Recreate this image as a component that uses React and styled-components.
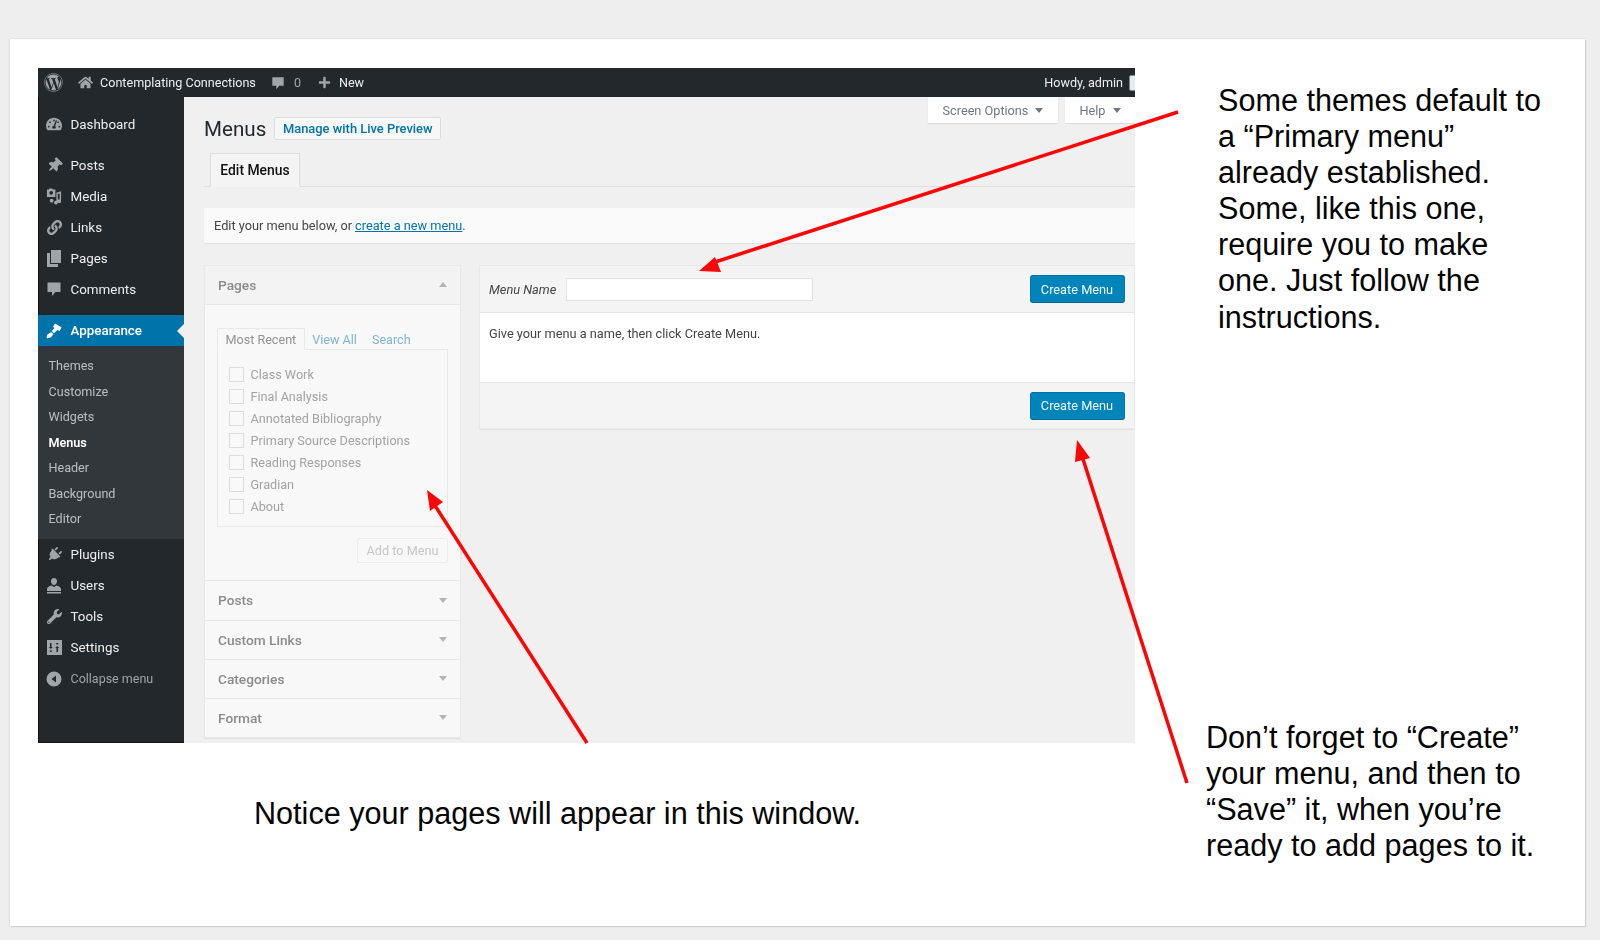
import React from "react";
import styled, { createGlobalStyle } from "styled-components";
import {
  FaWordpress, FaHome, FaPlus, FaTachometerAlt, FaThumbtack, FaLink, FaPlug, FaWrench,
} from "react-icons/fa";

const Global = createGlobalStyle`
  html, body { margin: 0; padding: 0; background: #eeeeee; }
  * { box-sizing: border-box; }
`;

const UI = `Roboto, "Liberation Sans", sans-serif`;

const Page = styled.div`
  position: relative;
  width: 1600px;
  height: 940px;
  padding: 39px 15.5px 14px 10px;
  overflow: hidden;
`;
const Slide = styled.div`
  display: flex;
  height: 887px;
  padding: 29px 0 0 28px;
  background: #fff;
  box-shadow: 1px 1px 1px #d0d0d0, -1px 0 1px #dcdcdc, 0 -1px 0 #e2e2e2;
`;
const LeftCol = styled.div`
  width: 1097px;
  flex: none;
`;
const RightCol = styled.div`
  flex: 1;
  padding-left: 71px;
`;
const Note = styled.p`
  margin: ${(p) => p.$top}px 0 0 ${(p) => p.$left}px;
  font: 30.6px/36.1px "Liberation Sans", Arial, sans-serif;
  color: #050505;
  white-space: pre-line;
`;
const Caption = styled.p`
  margin: 52px 0 0 216px;
  font: 30.6px/36px "Liberation Sans", Arial, sans-serif;
  color: #050505;
`;

const Frame = styled.div`
  height: 675px;
  display: flex;
  flex-direction: column;
  overflow: hidden;
  background: #f0f0f0;
  font-family: ${UI};
  filter: blur(0.3px);
`;
const AdminBar = styled.div`
  height: 29px;
  flex: none;
  background: #23282d;
  display: flex;
  align-items: center;
  color: #eee;
  font-size: 12.6px;
  padding-left: 6px;
`;
const BarIcon = styled.span`
  display: inline-flex;
  color: #a0a5aa;
  font-size: ${(p) => p.$size || 16}px;
  margin-left: ${(p) => p.$ml || 0}px;
  margin-right: ${(p) => p.$mr || 0}px;
`;
const BarText = styled.span`
  color: ${(p) => p.$dim ? "#a0a5aa" : "#eee"};
`;
const BarSpacer = styled.div`flex: 1;`;
const Avatar = styled.span`
  width: 16px;
  height: 16px;
  flex: none;
  margin: 0 -10px 0 6px;
  background: #dfeef2;
  border: 1px solid #888;
  border-radius: 2px;
`;
const Body = styled.div`
  flex: 1;
  display: flex;
  min-height: 0;
`;
const Sidebar = styled.nav`
  width: 146px;
  flex: none;
  background: #23282d;
  padding-top: 11.5px;
  box-shadow: inset 1px 0 #101214, inset 0 -1px #101214;
`;
const MenuRow = styled.div`
  position: relative;
  height: 31px;
  display: flex;
  align-items: center;
  padding-left: 8px;
  margin-top: ${(p) => p.$gap || 0}px;
  background: ${(p) => p.$active ? "#0073aa" : "transparent"};
  color: ${(p) => p.$dim ? "#a0a5aa" : p.$active ? "#fff" : "#eee"};
  font-size: ${(p) => p.$dim ? 12.5 : 13.4}px;
  ${(p) => p.$active && `
    &::after {
      content: "";
      position: absolute;
      right: 0;
      top: 9px;
      border: 7px solid transparent;
      border-right-color: #f0f0f0;
      border-left-width: 0;
    }
  `}
`;
const MenuIcon = styled.span`
  width: 16px;
  height: 18px;
  margin-right: 8.5px;
  display: flex;
  align-items: center;
  justify-content: center;
  color: ${(p) => p.$active ? "#fff" : "#a0a5aa"};
  font-size: 15px;
`;
const SubMenu = styled.div`
  background: #32373c;
  padding: 7.5px 0 7.5px 10.5px;
`;
const SubItem = styled.div`
  height: 25.5px;
  line-height: 25.5px;
  font-size: 12.6px;
  color: ${(p) => p.$current ? "#fff" : "rgba(240,245,250,.7)"};
  font-weight: ${(p) => p.$current ? 600 : 400};
`;

const Content = styled.main`
  flex: 1;
  min-width: 0;
  padding-left: 20px;
  display: flex;
  flex-direction: column;
`;
const MetaBar = styled.div`
  height: 0;
  display: flex;
  justify-content: flex-end;
  gap: 7px;
`;
const MetaTab = styled.div`
  width: ${(p) => p.$w}px;
  height: 26px;
  background: #fff;
  box-shadow: 0 1px 1px rgba(0,0,0,.08);
  display: flex;
  align-items: center;
  justify-content: center;
  gap: 7px;
  font-size: 12.7px;
  color: #72777c;
`;
const Caret = styled.span`
  width: 0;
  height: 0;
  border-left: 4px solid transparent;
  border-right: 4px solid transparent;
  border-${(p) => p.$up ? "bottom" : "top"}: 5px solid ${(p) => p.$color || "#72777c"};
`;
const TitleRow = styled.div`
  display: flex;
  align-items: center;
  gap: 8px;
  padding-top: 20px;
  height: 43px;
  flex: none;
`;
const Title = styled.h1`
  margin: 0;
  font-size: 20.6px;
  font-weight: 400;
  color: #23282d;
`;
const LiveButton = styled.span`
  height: 23px;
  width: 167px;
  display: flex;
  align-items: center;
  justify-content: center;
  background: #f7f7f7;
  border: 1px solid #ddd;
  border-radius: 2px;
  font-size: 12.9px;
  font-weight: 500;
  color: #0073aa;
`;
const TabLine = styled.div`
  height: 34px;
  margin-top: 13px;
  flex: none;
  padding-left: 6px;
  border-bottom: 1px solid #ddd;
`;
const Tab = styled.div`
  width: 90px;
  height: 34px;
  display: flex;
  align-items: center;
  justify-content: center;
  background: #f4f4f4;
  border: 1px solid #ddd;
  border-bottom-color: #f4f4f4;
  font-size: 13.9px;
  font-weight: 500;
  color: #111;
`;
const Notice = styled.div`
  height: 35px;
  flex: none;
  margin-top: 21px;
  padding-left: 10px;
  display: flex;
  align-items: center;
  background: #fafafa;
  box-shadow: 0 1px 1px rgba(0,0,0,.05);
  font-size: 12.75px;
  color: #444;
  a { color: #0073aa; text-decoration: underline; margin-left: 3px; }
`;
const Columns = styled.div`
  display: flex;
  gap: 18px;
  margin-top: 22px;
  align-items: flex-start;
`;
const Accordion = styled.div`
  width: 257px;
  flex: none;
  background: #f8f8f8;
  box-shadow: 0 1px 1px rgba(0,0,0,.06);
  border: 1px solid #e8e8e8;
  border-bottom: 0;
`;
const AccHead = styled.div`
  height: ${(p) => p.$h}px;
  display: flex;
  align-items: center;
  justify-content: space-between;
  padding: 0 13px 1px;
  background: ${(p) => p.$open ? "#f3f3f3" : "#f8f8f8"};
  border-bottom: 1px solid #e6e6e6;
  font-size: 13.7px;
  font-weight: 500;
  color: #8a8a8a;
`;
const AccBody = styled.div`
  height: 276px;
  padding: 23px 12px 0 12px;
  display: flex;
  flex-direction: column;
  border-bottom: 1px solid #e6e6e6;
`;
const MiniTabs = styled.div`
  height: 22px;
  flex: none;
  display: flex;
  align-items: stretch;
  font-size: 12.6px;
  margin-bottom: -1px;
  position: relative;
`;
const MiniTab = styled.span`
  padding: 0 7.5px;
  display: flex;
  align-items: center;
  margin-right: ${(p) => p.$mr || 0}px;
  color: ${(p) => p.$current ? "#929292" : "#7fb5d1"};
  ${(p) => p.$current && `
    border: 1px solid #e8e8e8;
    border-bottom-color: #f8f8f8;
  `}
`;
const PagePanel = styled.div`
  height: 178px;
  flex: none;
  border: 1px solid #e8e8e8;
  padding: 13px 10.5px 0;
  display: flex;
  flex-direction: column;
`;
const PageRow = styled.label`
  height: 22px;
  flex: none;
  display: flex;
  align-items: center;
  gap: 7px;
  font-size: 12.65px;
  color: #a2a2a2;
`;
const Check = styled.span`
  width: 15px;
  height: 15px;
  flex: none;
  background: #f9f9f9;
  border: 1px solid #dcdcdc;
`;
const AddRow = styled.div`
  display: flex;
  justify-content: flex-end;
  margin-top: 11px;
`;
const AddButton = styled.span`
  width: 91px;
  height: 25px;
  display: flex;
  align-items: center;
  justify-content: center;
  background: #f8f8f8;
  border: 1px solid #ececec;
  border-radius: 2px;
  font-size: 12.7px;
  color: #c6c6c6;
`;
const MenuBox = styled.section`
  flex: 1;
  min-width: 0;
  height: 164px;
  display: flex;
  flex-direction: column;
  border: 1px solid #e8e8e8;
  box-shadow: 0 1px 1px rgba(0,0,0,.05);
  background: #f4f4f4;
`;
const BoxHead = styled.div`
  height: 47px;
  flex: none;
  display: flex;
  align-items: center;
  padding: 0 9.5px 0 9px;
  border-bottom: 1px solid #e4e4e4;
`;
const NameLabel = styled.em`
  width: 77px;
  flex: none;
  font-size: 12.8px;
  color: #444;
`;
const NameInput = styled.div`
  width: 247px;
  height: 23px;
  background: #fff;
  border: 1px solid #e2e2e2;
`;
const BoxBody = styled.div`
  height: 70px;
  flex: none;
  padding: 13px 9px;
  background: #fff;
  border-bottom: 1px solid #e4e4e4;
  font-size: 12.75px;
  color: #444;
`;
const BoxFoot = styled.div`
  flex: 1;
  display: flex;
  align-items: center;
  justify-content: flex-end;
  padding-right: 9.5px;
`;
const Primary = styled.span`
  margin-left: auto;
  width: 95px;
  height: 28px;
  display: flex;
  align-items: center;
  justify-content: center;
  background: #0085ba;
  border: 1px solid #0073aa;
  border-bottom-color: #006799;
  border-radius: 3px;
  font-size: 12.75px;
  color: #f2f8fb;
`;
const Arrows = styled.svg`
  position: absolute;
  inset: 0;
  width: 1600px;
  height: 940px;
  pointer-events: none;
`;

const Bubble = ({ s = 16 }) => (
  <svg width={s} height={s} viewBox="0 0 16 16" fill="currentColor"><path d="M1.5 1.5h13v9.5H9.500L6 15v-4H1.500z" /></svg>
);
const Dial = ({ s = 16 }) => <FaTachometerAlt size={s} />;
const Media = () => (
  <svg width="17" height="17" viewBox="0 0 17 17" fill="currentColor">
    <path d="M1 1h2l.6-1h3l.6 1H10v8H1zM5.500 2.600a2 2 0 1 0 0 4 2 2 0 0 0 0-4z" fillRule="evenodd" />
    <path d="M11 4.500l5-1.500v10.500a2 2 0 1 1-1.500-1.900V5.300l-2 .6V15a2 2 0 1 1-1.500-1.900zM6 11a2 2 0 1 1-.01 0z" />
  </svg>
);
const Pages = () => (
  <svg width="16" height="17" viewBox="0 0 16 17" fill="currentColor">
    <path d="M5 0h10v13H5z" /><path d="M1 3h3v11h8v3H1z" />
  </svg>
);
const Brush = () => (
  <svg width="17" height="17" viewBox="0 0 17 17" fill="currentColor">
    <path d="M9.500 1L16.500 5l-2 4-2.500-1-3.500 3.500-2.500-2.500L9 6 7.500 4.500z" />
    <path d="M5.600 10l2.400 2.400-2.800 3.400c-.8.8-4.200 1.200-4.200 1.200s-.6-3 .6-4.200z" />
  </svg>
);
const User = () => (
  <svg width="16" height="17" viewBox="0 0 16 17" fill="currentColor">
    <path d="M8 1c2 0 3 1.500 3 3.300S10 8 8 8 5 6.100 5 4.300 6 1 8 1z" />
    <path d="M5.500 8.500L8 10l2.500-1.500c2 .5 4.500 1.500 4.500 3.500v2H1v-2c0-2 2.500-3 4.500-3.500zM1 15h14v1.500H1z" />
  </svg>
);
const Settings = () => (
  <svg width="15" height="15" viewBox="0 0 15 15" fill="currentColor" fillRule="evenodd">
    <path d="M0 0h15v15H0zM3 3v4H1.800l2 2 2-2H4.500V3zM11 12V8h1.200l-2-2-2 2h1.300v4zM2.800 10.500v1.500h2v-1.500zM9.300 3v1.500h2V3z" />
  </svg>
);
const Collapse = () => (
  <svg width="16" height="16" viewBox="0 0 16 16" fill="currentColor" fillRule="evenodd">
    <path d="M8 .5a7.500 7.500 0 1 1 0 15 7.500 7.500 0 0 1 0-15zM10 4.500L5.500 8l4.500 3.500z" />
  </svg>
);

const topItems = [
  ["Posts", <FaThumbtack style={{ transform: "rotate(45deg)" }} />],
  ["Media", <Media />],
  ["Links", <FaLink />],
  ["Pages", <Pages />],
  ["Comments", <Bubble />],
];
const subItems = ["Themes", "Customize", "Widgets", "Menus", "Header", "Background", "Editor"];
const lowItems = [
  ["Plugins", <FaPlug style={{ transform: "rotate(45deg) scaleX(-1)" }} />],
  ["Users", <User />],
  ["Tools", <FaWrench />],
  ["Settings", <Settings />],
];
const pages = ["Class Work", "Final Analysis", "Annotated Bibliography", "Primary Source Descriptions", "Reading Responses", "Gradian", "About"];
const closed = [["Posts", 40], ["Custom Links", 39], ["Categories", 39], ["Format", 39]];

export default function App() {
  return (
    <Page>
      <Global />
      <Slide>
        <LeftCol>
          <Frame>
            <AdminBar>
              <BarIcon $size={19} $mr={15}><FaWordpress /></BarIcon>
              <BarIcon $size={15} $mr={7}><FaHome /></BarIcon>
              <BarText>Contemplating Connections</BarText>
              <BarIcon $size={14} $ml={15} $mr={9}><Bubble s={14} /></BarIcon>
              <BarText $dim>0</BarText>
              <BarIcon $size={13} $ml={17} $mr={8}><FaPlus /></BarIcon>
              <BarText>New</BarText>
              <BarSpacer />
              <BarText>Howdy, admin</BarText>
              <Avatar />
            </AdminBar>
            <Body>
              <Sidebar>
                <MenuRow><MenuIcon><Dial /></MenuIcon>Dashboard</MenuRow>
                {topItems.map(([t, ic], i) => (
                  <MenuRow key={t} $gap={i === 0 ? 10 : 0}><MenuIcon>{ic}</MenuIcon>{t}</MenuRow>
                ))}
                <MenuRow $gap={10} $active><MenuIcon $active><Brush /></MenuIcon><b style={{ fontWeight: 500 }}>Appearance</b></MenuRow>
                <SubMenu>
                  {subItems.map((t) => <SubItem key={t} $current={t === "Menus"}>{t}</SubItem>)}
                </SubMenu>
                {lowItems.map(([t, ic]) => (
                  <MenuRow key={t}><MenuIcon>{ic}</MenuIcon>{t}</MenuRow>
                ))}
                <MenuRow $dim><MenuIcon><Collapse /></MenuIcon>Collapse menu</MenuRow>
              </Sidebar>
              <Content>
                <MetaBar>
                  <MetaTab $w={130}>Screen Options <Caret /></MetaTab>
                  <MetaTab $w={70}>Help <Caret /></MetaTab>
                </MetaBar>
                <TitleRow>
                  <Title>Menus</Title>
                  <LiveButton>Manage with Live Preview</LiveButton>
                </TitleRow>
                <TabLine><Tab>Edit Menus</Tab></TabLine>
                <Notice>Edit your menu below, or <a>create a new menu</a>.</Notice>
                <Columns>
                  <Accordion>
                    <AccHead $open $h={39}>Pages <Caret $up $color="#b4b4b4" /></AccHead>
                    <AccBody>
                      <MiniTabs>
                        <MiniTab $current>Most Recent</MiniTab>
                        <MiniTab>View All</MiniTab>
                        <MiniTab>Search</MiniTab>
                      </MiniTabs>
                      <PagePanel>
                        {pages.map((p) => <PageRow key={p}><Check />{p}</PageRow>)}
                      </PagePanel>
                      <AddRow><AddButton>Add to Menu</AddButton></AddRow>
                    </AccBody>
                    {closed.map(([t, h]) => (
                      <AccHead key={t} $h={h}>{t} <Caret $color="#b4b4b4" /></AccHead>
                    ))}
                  </Accordion>
                  <MenuBox>
                    <BoxHead>
                      <NameLabel>Menu Name</NameLabel>
                      <NameInput />
                      <Primary>Create Menu</Primary>
                    </BoxHead>
                    <BoxBody>Give your menu a name, then click Create Menu.</BoxBody>
                    <BoxFoot><Primary>Create Menu</Primary></BoxFoot>
                  </MenuBox>
                </Columns>
              </Content>
            </Body>
          </Frame>
          <Caption>Notice your pages will appear in this window.</Caption>
        </LeftCol>
        <RightCol>
          <Note $top={14} $left={12}>{"Some themes default to\na “Primary menu”\nalready established.\nSome, like this one,\nrequire you to make\none. Just follow the\ninstructions."}</Note>
          <Note $top={384} $left={0}>{"Don’t forget to “Create”\nyour menu, and then to\n“Save” it, when you’re\nready to add pages to it."}</Note>
        </RightCol>
      </Slide>
      <Arrows viewBox="0 0 1600 940">
        <g stroke="#fb0505" strokeWidth="3.5" fill="none">
          <line x1="1178" y1="112" x2="712" y2="263" />
          <line x1="587" y1="743" x2="434" y2="504" />
          <line x1="1187" y1="783" x2="1082" y2="456" />
        </g>
        <g fill="#fb0505">
          <polygon points="699,271 715,257 721,272" />
          <polygon points="427,490 443,502 430,511" />
          <polygon points="1077,440 1090,458 1075,462" />
        </g>
      </Arrows>
    </Page>
  );
}
